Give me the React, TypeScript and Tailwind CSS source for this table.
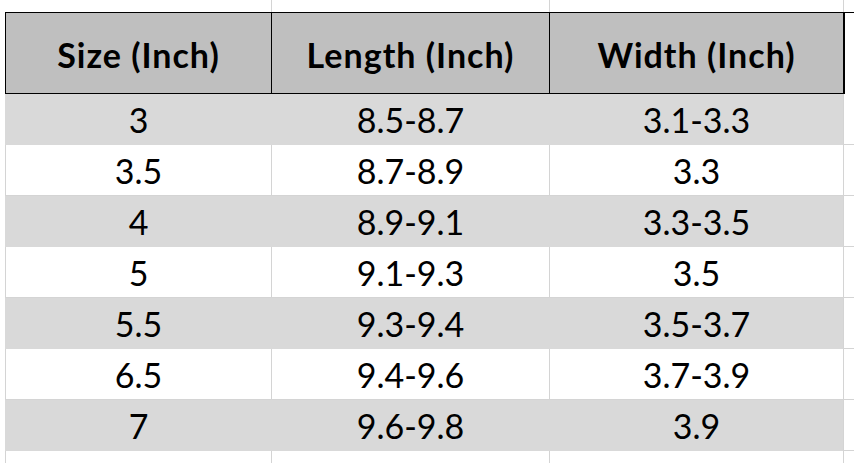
import React from "react";

const rows: [string, string, string][] = [
  ["3", "8.5-8.7", "3.1-3.3"],
  ["3.5", "8.7-8.9", "3.3"],
  ["4", "8.9-9.1", "3.3-3.5"],
  ["5", "9.1-9.3", "3.5"],
  ["5.5", "9.3-9.4", "3.5-3.7"],
  ["6.5", "9.4-9.6", "3.7-3.9"],
  ["7", "9.6-9.8", "3.9"],
];

const font = { fontFamily: "Lato, 'Open Sans', sans-serif" };

export default function App() {
  return (
    <div className="w-[854px] h-[463px] bg-white overflow-hidden flex flex-col text-black" style={font}>
      {/* top strip */}
      <div className="flex h-[12px] shrink-0">
        <div className="w-[5px]" />
        <div className="w-[266px]" />
        <div className="w-[278px] border-l border-[#d4d4d4]" />
        <div className="w-[294px] border-l border-[#d4d4d4]" />
        <div className="w-[11px] border-l border-[#d4d4d4]" />
      </div>
      {/* header */}
      <div className="flex h-[82px] shrink-0">
        <div className="w-[5px]" />
        <div className="w-[266px] bg-[#bfbfbf] border-l border-t border-b border-black flex items-center justify-center text-[34px] tracking-[1px] font-bold pt-[3px]">
          Size (Inch)
        </div>
        <div className="w-[278px] bg-[#bfbfbf] border-l border-t border-b border-black flex items-center justify-center text-[34px] tracking-[1px] font-bold pt-[3px]">
          Length (Inch)
        </div>
        <div className="w-[294px] bg-[#bfbfbf] border-l border-t border-b border-black flex items-center justify-center text-[34px] tracking-[1px] font-bold pt-[3px]">
          Width (Inch)
        </div>
        <div className="w-[11px] border-l-2 border-t border-black" />
      </div>
      {/* data rows */}
      {rows.map((r, i) => {
        const shaded = i % 2 === 0;
        const cell = shaded
          ? "bg-[#d9d9d9] border-l border-[#d9d9d9]"
          : "bg-white border-l border-b border-[#d4d4d4]";
        return (
          <div key={i} className="flex h-[51px] shrink-0">
            <div className="w-[5px]" />
            <div className={`w-[266px] ${cell} flex items-center justify-center text-[34px]`}>{r[0]}</div>
            <div className={`w-[278px] ${cell} flex items-center justify-center text-[34px]`}>{r[1]}</div>
            <div className={`w-[294px] ${cell} flex items-center justify-center text-[34px]`}>{r[2]}</div>
            <div className="w-[11px] border-l border-b border-[#d4d4d4]" />
          </div>
        );
      })}
      {/* bottom strip */}
      <div className="flex flex-1">
        <div className="w-[5px]" />
        <div className="w-[266px] border-l border-[#d4d4d4]" />
        <div className="w-[278px] border-l border-[#d4d4d4]" />
        <div className="w-[294px] border-l border-[#d4d4d4]" />
        <div className="w-[11px] border-l border-[#d4d4d4]" />
      </div>
    </div>
  );
}
